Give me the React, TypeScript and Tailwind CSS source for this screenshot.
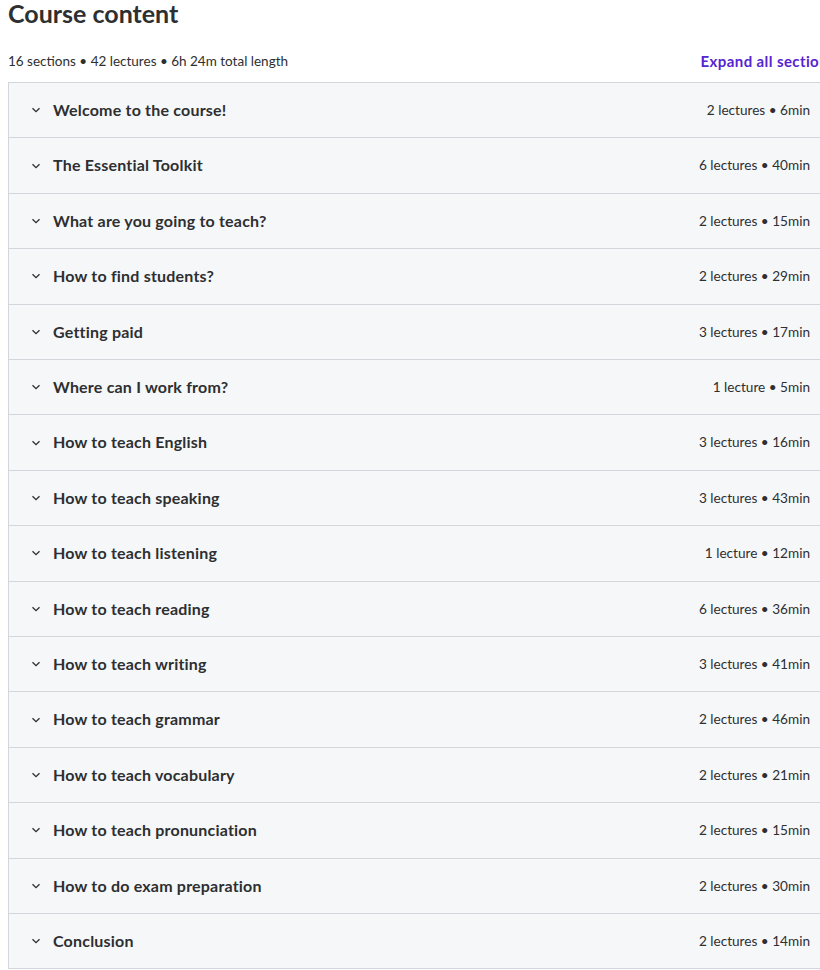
import React from 'react';

interface Section {
  title: string;
  meta: string;
}

const sections: Section[] = [
  { title: 'Welcome to the course!', meta: '2 lectures • 6min' },
  { title: 'The Essential Toolkit', meta: '6 lectures • 40min' },
  { title: 'What are you going to teach?', meta: '2 lectures • 15min' },
  { title: 'How to find students?', meta: '2 lectures • 29min' },
  { title: 'Getting paid', meta: '3 lectures • 17min' },
  { title: 'Where can I work from?', meta: '1 lecture • 5min' },
  { title: 'How to teach English', meta: '3 lectures • 16min' },
  { title: 'How to teach speaking', meta: '3 lectures • 43min' },
  { title: 'How to teach listening', meta: '1 lecture • 12min' },
  { title: 'How to teach reading', meta: '6 lectures • 36min' },
  { title: 'How to teach writing', meta: '3 lectures • 41min' },
  { title: 'How to teach grammar', meta: '2 lectures • 46min' },
  { title: 'How to teach vocabulary', meta: '2 lectures • 21min' },
  { title: 'How to teach pronunciation', meta: '2 lectures • 15min' },
  { title: 'How to do exam preparation', meta: '2 lectures • 30min' },
  { title: 'Conclusion', meta: '2 lectures • 14min' },
];

const Chevron: React.FC = () => (
  <svg width="10" height="10" viewBox="0 0 10 10" fill="none" className="shrink-0">
    <path d="M1.5 3.2L5 6.7L8.5 3.2" stroke="#2d2f31" strokeWidth="1.3" />
  </svg>
);

const App: React.FC = () => {
  return (
    <div className="w-[820px] overflow-hidden bg-white font-['Lato',sans-serif] text-[#2d2f31]">
      <div className="w-[835px] pl-2">
        <h2 className="text-[25px] leading-[26px] font-bold">Course content</h2>

        <div className="mt-[26px] mb-[10.4px] flex items-center justify-between text-[13.5px] leading-[19.6px]">
          <span>16 sections • 42 lectures • 6h 24m total length</span>
          <button className="font-bold text-[15px] tracking-[0.4px] text-[#5624d0] whitespace-nowrap">
            Expand all sections
          </button>
        </div>

        <div className="border border-b-0 border-[#d1d7dc]">
          {sections.map(s => (
            <div
              key={s.title}
              className="flex items-center justify-between bg-[#f6f7f9] border-b border-[#d1d7dc] pl-[22px] pr-6 py-4"
            >
              <div className="flex items-center gap-3">
                <Chevron />
                <span className="text-[16px] leading-[22.4px] font-bold tracking-[0.2px]">{s.title}</span>
              </div>
              <span className="text-[13.6px] leading-[22.4px]">{s.meta}</span>
            </div>
          ))}
        </div>
      </div>
    </div>
  );
};

export default App;
